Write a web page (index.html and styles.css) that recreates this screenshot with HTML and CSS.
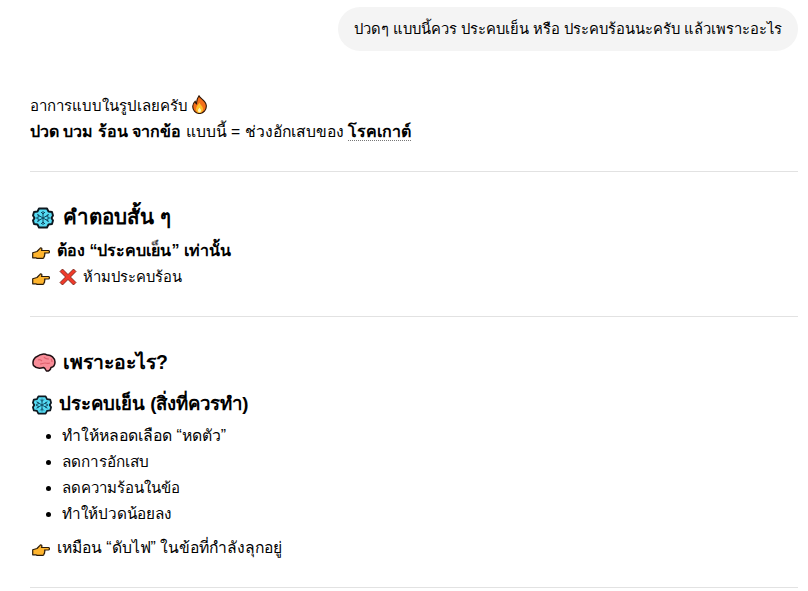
FILE: index.html
```html
<!DOCTYPE html>
<html lang="th">
<head>
<meta charset="utf-8">
<title>แชท</title>
<link rel="stylesheet" href="styles.css">
</head>
<body>
<svg class="defs" width="0" height="0" aria-hidden="true">
  <defs>
    <symbol id="flake" viewBox="0 0 22 22">
      <path d="M7 1.500h8l1.500 3 3.500.5 1 3.500L19.500 11l1.500 2.500-1 3.500-3.500.5-1.500 3H7l-1.500-3L2 17l-1-3.500L2.500 11 1 8.500 2 5l3.500-.5z" fill="#55dcf5" stroke="#0e1820" stroke-width="1.900" stroke-linejoin="round"/>
      <path d="M11 4v14M5 7.500l12 7M17 7.500l-12 7M9 5l2 2 2-2M9 17l2-2 2 2M4.500 10.500l2.600-.7-.7-2.300M17.500 11.500l-2.600.7.700 2.300M17.500 10.500l-2.600-.7.700-2.300M4.500 11.500l2.600.7-.7 2.300" fill="none" stroke="#10465f" stroke-width="1"/>
    </symbol>
    <symbol id="point" viewBox="0 0 18 13">
      <path d="M.7 5.800l4.300-1.300 3-3.200c.5-.7 2.300-.4 1.800 1.200l-.3 1h6.800c1.500 0 1.500 2.500 0 2.500h-3.800c.6.500.5 1.700-.1 2 .5.600.2 1.600-.5 1.800.2.800-.3 1.600-1.200 1.600H5l-1-.6H.7z" fill="#ffb52e" stroke="#2a1a08" stroke-width="1.200" stroke-linejoin="round"/>
    </symbol>
    <symbol id="cross" viewBox="0 0 18 18">
      <path d="M3.500 1L9 6.500 14.500 1 17 3.500 11.500 9 17 14.500 14.500 17 9 11.500 3.500 17 1 14.500 6.500 9 1 3.500z" fill="#f03a2a" stroke="#6a1a10" stroke-width=".8" stroke-linejoin="round"/>
    </symbol>
    <symbol id="brain" viewBox="0 0 24 20">
      <path d="M1.500 12.500C0 8.500 2 4 6 3c2-2 7-2.500 9-1 4-.5 8 3 8 7 0 3-1.500 5-4 5.500-.5 2.500-2.500 4-4.500 3.500-1.500-1.500-1-3-3-3.500-3 1-7.500 1-10-2z" fill="#f88d98" stroke="#1f0e12" stroke-width="1.500" stroke-linejoin="round"/>
      <path d="M6 7c2-1 3 0 4 1M12 4c1 2 3 2 5 2M8 11c2 0 3-1 5-1 2 0 3 1 5 0M19 6c1 1 1 2 1 3" fill="none" stroke="#e0626f" stroke-width="1.200"/>
    </symbol>
    <symbol id="fire" viewBox="0 0 15 19">
      <path d="M7 .7c1 2.800 6.800 4.800 7.300 9.800.4 4.500-3 8-6.800 8S.4 15.300.8 11c.2-2.300 1.400-3.800 2.500-4.800 0 1.400.4 2.200 1.300 2.700C4.300 5.800 5.400 3 7 .7z" fill="#f4701b" stroke="#2e1708" stroke-width="1.100" stroke-linejoin="round"/>
      <path d="M7.500 7.500c.5 2 3.500 3.500 3.500 6.500 0 2.500-1.700 4-3.500 4S4 16.500 4 14c0-2.500 2.500-4.500 3.500-6.500z" fill="#fdc12a"/>
      <path d="M7.500 12.500c.5 1 1.500 1.700 1.500 3 0 1-.7 1.800-1.500 1.800S6 16.500 6 15.500c0-1.300 1-2 1.500-3z" fill="#fff2bd"/>
    </symbol>
  </defs>
</svg>

<main class="chat">
  <div class="user-row">
    <p class="bubble">ปวดๆ แบบนี้ควร ประคบเย็น หรือ ประคบร้อนนะครับ แล้วเพราะอะไร</p>
  </div>

  <article class="reply">
    <p class="para size-b">อาการแบบในรูปเลยครับ <svg class="ic ic-fire"><use href="#fire"/></svg></p>
    <p class="para size-d"><strong>ปวด บวม ร้อน จากข้อ</strong> แบบนี้ = ช่วงอักเสบของ <strong class="term">โรคเกาต์</strong></p>

    <hr class="rule">

    <h2 class="h2 h2-long"><svg class="ic ic-h2"><use href="#flake"/></svg>คำตอบสั้น ๆ</h2>
    <p class="para"><svg class="ic ic-point"><use href="#point"/></svg><strong>ต้อง “ประคบเย็น” เท่านั้น</strong></p>
    <p class="para"><svg class="ic ic-point"><use href="#point"/></svg><svg class="ic ic-cross"><use href="#cross"/></svg>ห้ามประคบร้อน</p>

    <hr class="rule">

    <h2 class="h2 h2-short"><svg class="ic ic-brain"><use href="#brain"/></svg>เพราะอะไร?</h2>
    <h3 class="h3"><svg class="ic ic-h3"><use href="#flake"/></svg>ประคบเย็น (สิ่งที่ควรทำ)</h3>
    <ul class="list">
      <li class="size-e">ทำให้หลอดเลือด “หดตัว”</li>
      <li class="size-c">ลดการอักเสบ</li>
      <li class="size-b">ลดความร้อนในข้อ</li>
      <li class="size-c">ทำให้ปวดน้อยลง</li>
    </ul>
    <p class="para size-d"><svg class="ic ic-point"><use href="#point"/></svg>เหมือน “ดับไฟ” ในข้อที่กำลังลุกอยู่</p>

    <hr class="rule">
  </article>
</main>
</body>
</html>
```
FILE: styles.css
```css
* { box-sizing: border-box; }
html, body { margin: 0; padding: 0; background: #fff; }
body {
  height: 591px;
  overflow: hidden;
  font-family: "Liberation Sans", Arial, sans-serif;
  font-size: 14.75px;
  line-height: 26px;
  color: #000;
}
.defs { position: absolute; }
.chat { padding: 7px 10px 0 30px; }
.user-row { display: flex; justify-content: flex-end; }
.bubble {
  margin: 0;
  padding: 9px 16px;
  background: #f4f4f4;
  border-radius: 22px;
}
.reply { padding-top: 42px; }
.para { margin: 0; }
.size-b { font-size: 15px; }
.size-c { font-size: 15.3px; }
.size-d { font-size: 15.7px; }
.size-e { font-size: 15.8px; }
strong { font-size: 16px; }
.term { border-bottom: 1px dotted #777; }
.rule { border: 0; border-top: 1px solid #e2e2e2; margin: 26px 0 0; }
.h2 { margin: 30px 0 6px; line-height: 30px; font-weight: 700; }
.h2-long { font-size: 20.5px; }
.h2-short { font-size: 19.4px; }
.h3 { margin: 14px 0 6px; font-size: 18.6px; line-height: 26px; font-weight: 700; }
.list { margin: 0 0 8px; padding-left: 32px; }
.ic { display: inline-block; }
.ic-fire { width: 15px; height: 19px; vertical-align: -3px; }
.ic-h2 { width: 22px; height: 22px; margin: 0 9px 0 2px; vertical-align: -5px; }
.ic-h3 { width: 20px; height: 20px; margin: 0 7px 0 2px; vertical-align: -5px; }
.ic-point { width: 18px; height: 13px; margin: 0 7px 0 2px; vertical-align: -4px; }
.ic-cross { width: 18px; height: 18px; margin: 0 6px 0 2px; vertical-align: -4px; }
.ic-brain { width: 24px; height: 20px; margin: 0 7px 0 2px; vertical-align: -4px; }
```
